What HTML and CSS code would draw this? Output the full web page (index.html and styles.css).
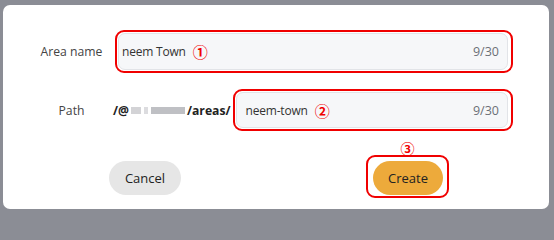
FILE: index.html
```html
<!DOCTYPE html>
<html lang="en">
<head>
<meta charset="utf-8">
<title>Create area</title>
<link rel="stylesheet" href="styles.css">
</head>
<body>
<div class="dialog">
  <div class="row row-name">
    <div class="label">Area name</div>
    <div class="mark mark-name">
      <div class="input input-name">
        <span class="value">neem Town</span>
        <span class="num">①</span>
        <span class="count">9/30</span>
      </div>
    </div>
  </div>
  <div class="row row-path">
    <div class="label">Path</div>
    <div class="prefix">/@<span class="blur"><i class="b1"></i><i class="b2"></i><i class="b3"></i></span>/areas/</div>
    <div class="mark mark-path">
      <div class="input input-path">
        <span class="value">neem-town</span>
        <span class="num">②</span>
        <span class="count">9/30</span>
      </div>
    </div>
  </div>
  <div class="actions">
    <button class="btn btn-cancel">Cancel</button>
    <div class="create-wrap">
      <span class="num num-create">③</span>
      <div class="mark mark-create">
        <button class="btn btn-create">Create</button>
      </div>
    </div>
  </div>
</div>
</body>
</html>
```

FILE: styles.css
```css
html, body {
  margin: 0;
  padding: 0;
}
body {
  width: 554px;
  height: 216px;
  background: #8b8d95;
  font-family: "Open Sans", "Noto Sans", sans-serif;
  color: #2b2b2b;
  overflow: hidden;
}
.dialog {
  margin: 5px 0 0 3px;
  width: 546px;
  height: 204px;
  background: #ffffff;
  border-radius: 7px;
  box-sizing: border-box;
  padding: 25px 36px 0 28px;
}
.row {
  display: flex;
  align-items: center;
}
.row-path {
  margin-top: 16px;
}
.label {
  width: 81px;
  flex: none;
  text-align: center;
  font-size: 12.2px;
  color: #444;
}
.mark {
  border: 2px solid #f00000;
  border-radius: 9px;
  padding: 1px 3px 1px 1px;
}
.mark-name {
  margin-left: 3px;
  flex: 1;
}
.mark-path {
  margin-left: 2px;
  flex: 1;
}
.input {
  height: 35px;
  border: 1px solid #e2e4e8;
  border-radius: 7px;
  background: #f6f7f9;
  display: flex;
  align-items: center;
  font-size: 12px;
  color: #333;
  padding-right: 8px;
}
.input-name {
  padding-left: 3px;
}
.input-path {
  padding-left: 9px;
  height: 34px;
}
.value {
  white-space: nowrap;
  letter-spacing: -0.2px;
}
.num {
  color: #f00000;
  font-family: "Noto Sans CJK JP", sans-serif;
  font-weight: 700;
  font-size: 15px;
  line-height: 1;
  margin-left: 7px;
}
.count {
  margin-left: auto;
  color: #6b6f76;
  font-size: 12.5px;
}
.prefix {
  margin-left: 1px;
  font-size: 12.2px;
  font-weight: 700;
  color: #222;
  display: flex;
  align-items: center;
  white-space: nowrap;
}
.blur {
  display: inline-flex;
  align-items: center;
  gap: 3px;
  margin: 0 2px;
}
.blur i {
  display: block;
  height: 7px;
  background: #c9c9cc;
}
.blur .b1 { width: 10px; background: #d3d3d6; }
.blur .b2 { width: 4px; background: #dcdcdf; }
.blur .b3 { width: 34px; background: #bfc0c4; }
.actions {
  display: flex;
  align-items: flex-end;
  margin-top: 12px;
  padding-left: 78px;
}
.btn {
  border: none;
  border-radius: 17px;
  height: 34px;
  font-family: inherit;
  font-size: 13px;
  color: #222;
  cursor: pointer;
}
.btn-cancel {
  width: 72px;
  background: #e6e6e6;
  margin-bottom: 3px;
}
.create-wrap {
  margin-left: 185px;
  display: flex;
  flex-direction: column;
  align-items: center;
}
.num-create {
  margin: 0 0 2px 0;
  font-size: 14px;
  line-height: 10px;
  height: 10px;
}
.mark-create {
  padding: 4px 4px 1px 5px;
}
.btn-create {
  width: 70px;
  background: #edaa3b;
}
```
